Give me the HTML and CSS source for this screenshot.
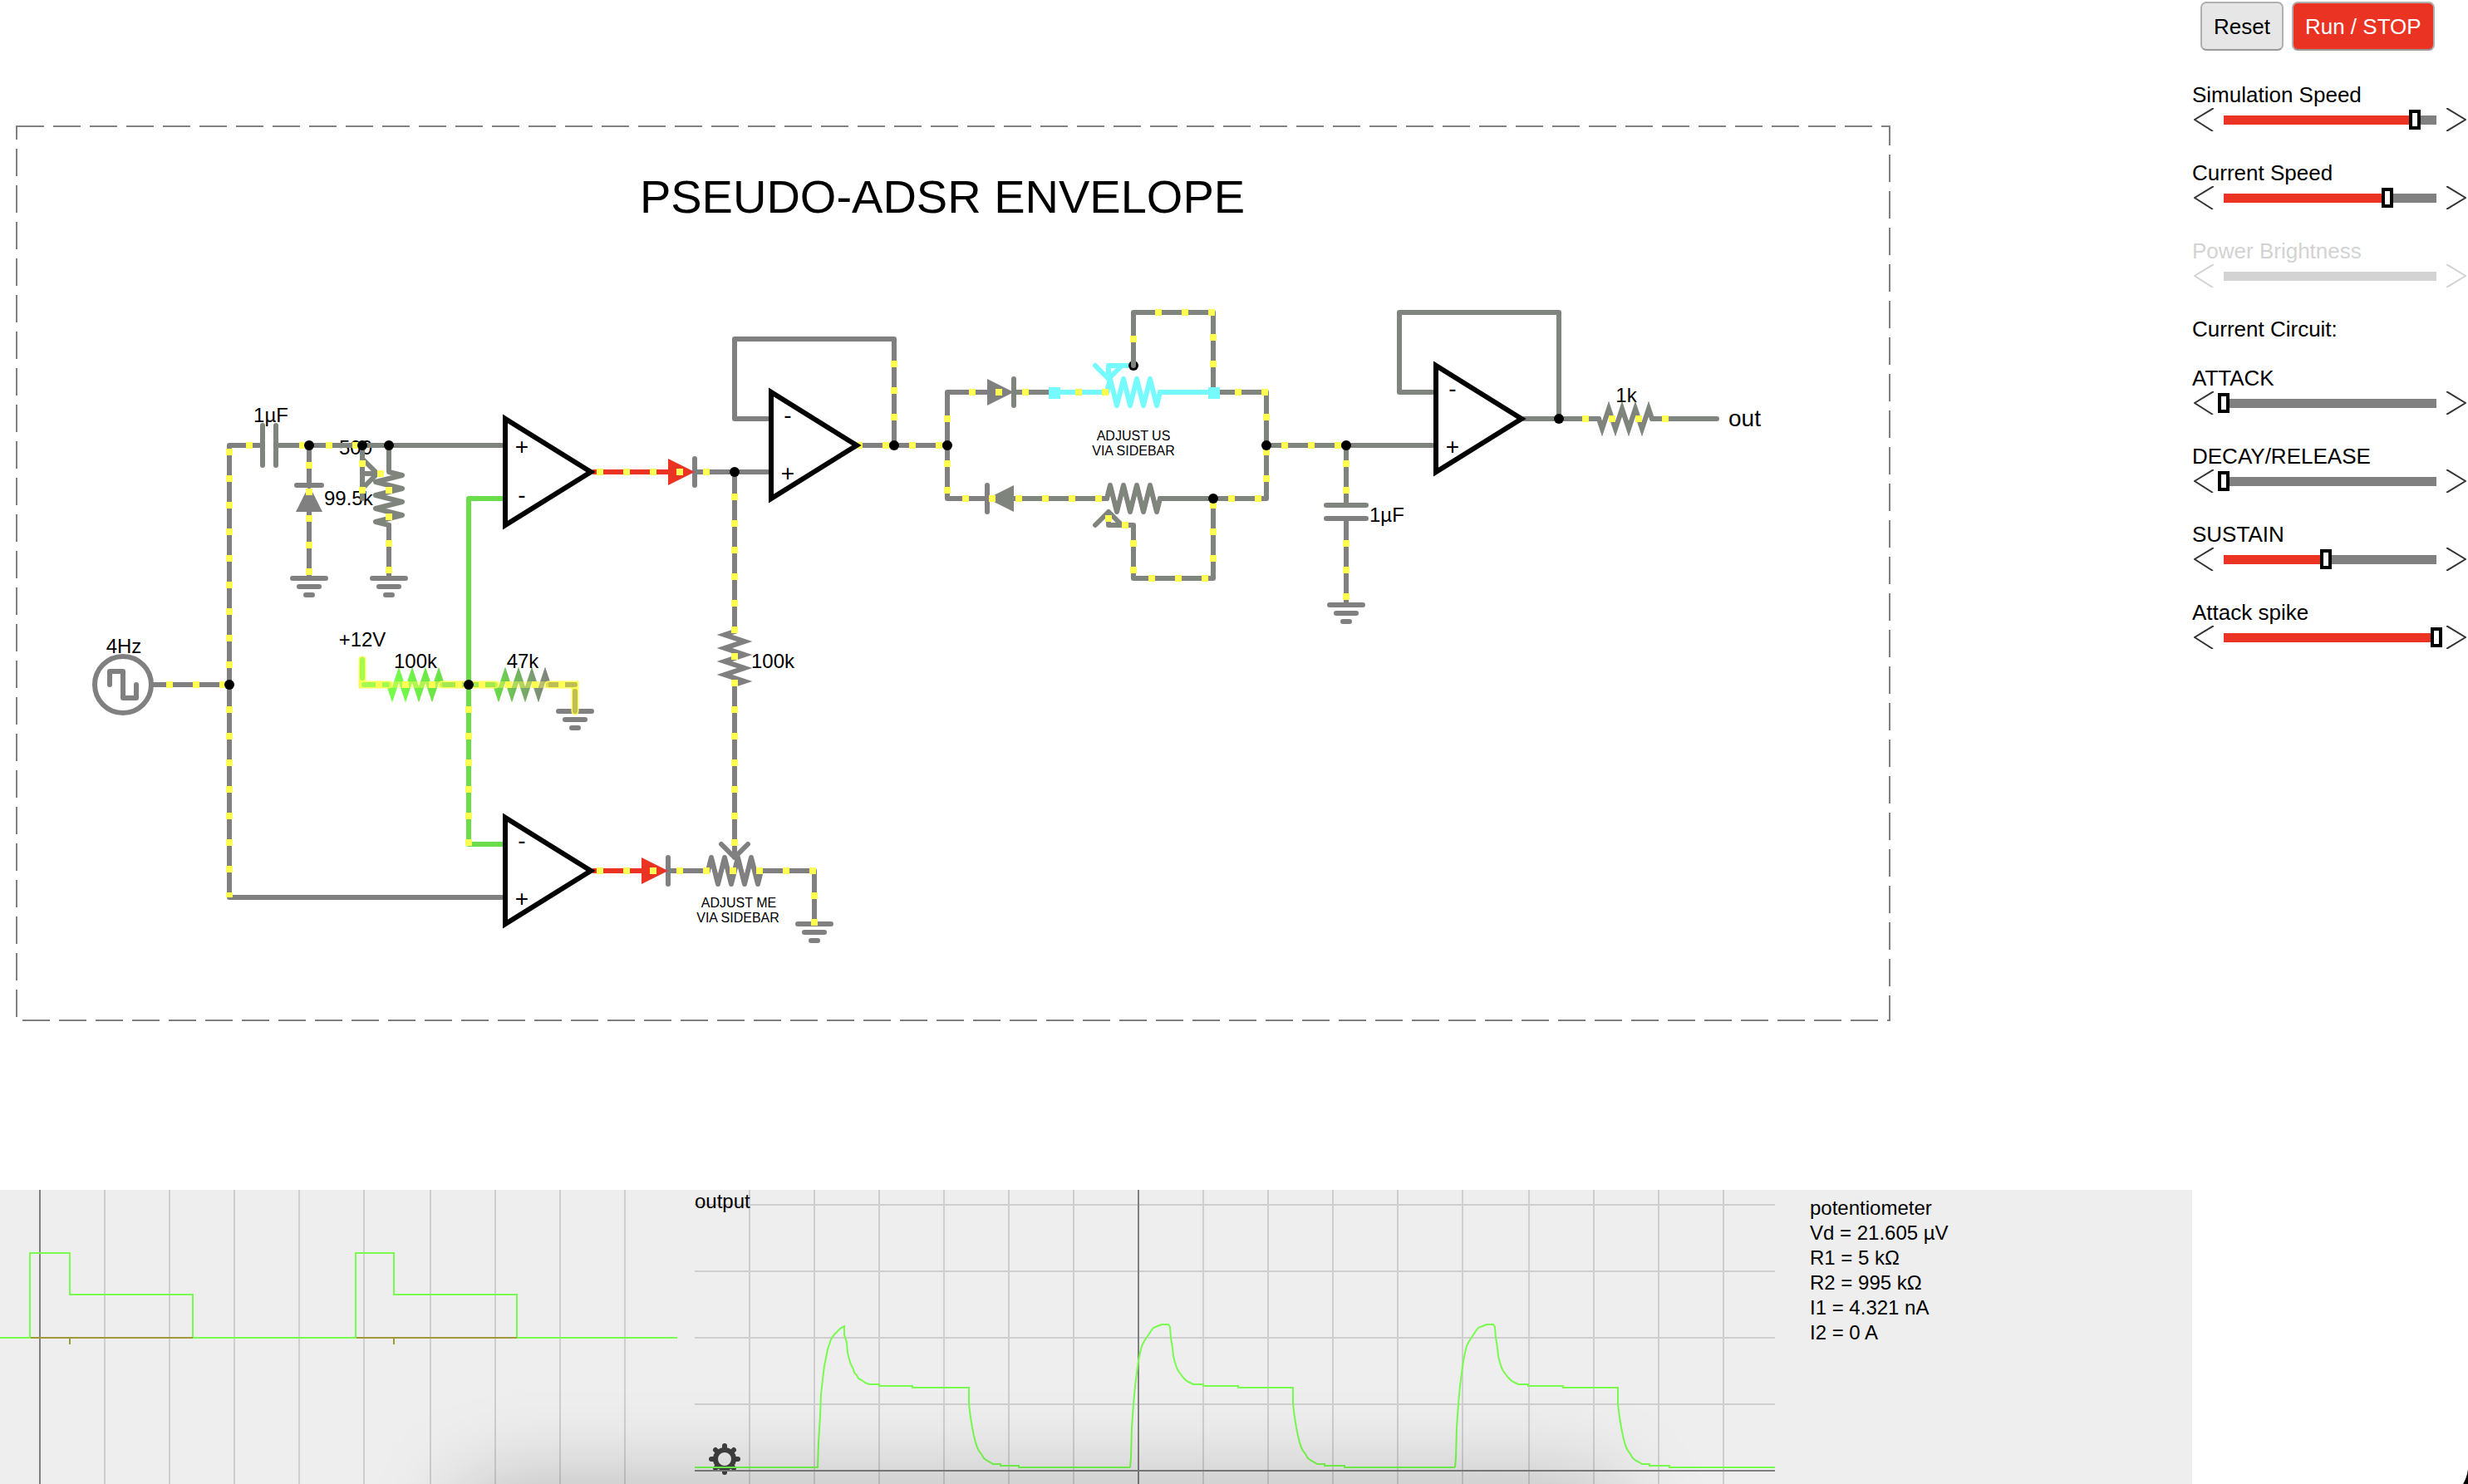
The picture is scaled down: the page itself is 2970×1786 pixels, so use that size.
FILE: index.html
```html
<!DOCTYPE html>
<html lang="en">
<head>
<meta charset="utf-8">
<title>Circuit Simulator</title>
<link rel="stylesheet" href="styles.css">
</head>
<body>
<div class="app">
  <main class="workspace">
    <svg class="circuit" viewBox="0 0 2638 1432" role="img" aria-label="Pseudo-ADSR envelope circuit">
      <defs>
        <linearGradient id="r100" gradientUnits="userSpaceOnUse" x1="0" y1="0" x2="64" y2="0">
          <stop offset="0" stop-color="#74ff4a"/><stop offset="1" stop-color="#6ae045"/>
        </linearGradient>
        <linearGradient id="r47" gradientUnits="userSpaceOnUse" x1="0" y1="0" x2="64" y2="0">
          <stop offset="0" stop-color="#68dc48"/><stop offset="1" stop-color="#808080"/>
        </linearGradient>
        <g id="ground"><path d="M-20 0H20M-12 10H12M-4 20H4"/></g>
        <path id="opamp" d="M0-64V64L103 0Z"/>
        <path id="pot" d="M0 0L4-16L12 16L20-16L28 16L36-16L44 16L52-16L60 16L64 0"/>
        <path id="resistor" d="M0 0L4 12L12-12L20 12L28-12L36 12L44-12L52 12L60-12L64 0"/>
        <path id="diode" d="M0-16V16L32 0Z"/>
      </defs>

      <rect class="frame" x="20" y="152" width="2254" height="1076"/>

      <g class="text">
        <text class="title" x="1134" y="256">PSEUDO-ADSR ENVELOPE</text>
        <text class="mid" x="326" y="508">1µF</text>
        <text class="mid" x="428" y="547">500</text>
        <text x="390" y="608">99.5k</text>
        <text class="mid" x="149" y="786">4Hz</text>
        <text class="mid" x="436" y="778">+12V</text>
        <text x="904" y="804">100k</text>
        <text x="1648" y="628">1µF</text>
        <text class="mid" x="1957" y="484">1k</text>
        <text class="big" x="2080" y="513">out</text>
        <text class="small" x="889" y="1092">ADJUST ME</text>
        <text class="small" x="888" y="1110">VIA SIDEBAR</text>
        <text class="small" x="1364" y="530">ADJUST US</text>
        <text class="small" x="1364" y="548">VIA SIDEBAR</text>
      </g>

      <g class="wire">
        <circle cx="148" cy="824" r="34"/>
        <path d="M132 824V808H148V840H164V824"/>
        <path d="M184 824H276M316 536H276V1080H608M884 504V408H1076V536M884 504H928"/>
        <path d="M372 536V584M357 584H387M372 616V696M468 632V696"/>
        <path d="M836 568H928M836 552V584M884 568V760M884 824V1032M868 1016L884 1032L900 1016"/>
        <path d="M804 1048H852M804 1032V1064M916 1048H980V1112M1034 536H1140M1188 472H1140V600H1188M1188 584V616"/>
        <use href="#pot" x="852" y="1048"/>
        <path class="sharp" d="M884 760L872 764L896 772L872 780L896 788L872 796L896 804L872 812L896 820L884 824"/>
        <use href="#ground" x="372" y="696"/><use href="#ground" x="468" y="696"/>
        <use href="#ground" x="692" y="856"/><use href="#ground" x="980" y="1112"/>
        <use href="#ground" x="1620" y="728"/>
        <path d="M1596 624H1644M1620 624V728"/>
      </g>
      <g class="wire charged">
        <path d="M316 512V560M332 512V560M332 536H608M436 536V600M438 554L454 570L438 586M436 570H454"/>
        <path d="M468 536V568L484 572L452 580L484 588L452 596L484 604L452 612L484 620L452 628L468 632"/>
        <path d="M1220 472H1268M1220 456V488M1460 472H1524V600M1220 600H1332M1396 600H1524M1460 600V696H1364V632H1334V616M1318 632L1334 616L1350 632"/>
        <path d="M1524 536H1728M1620 536V608M1596 608H1644M1728 472H1684V376H1876V504M1834 504H1924M1988 504H2066"/>
        <use href="#pot" x="1332" y="600"/>
        <use class="sharp" href="#resistor" x="1924" y="504"/>
      </g>
      <g class="wire green"><path d="M608 600H564V1016H608"/></g>
      <g class="wire red"><path d="M714 568H804M714 1048H772"/></g>
      <g class="wire cyan">
        <path d="M1268 472H1332M1396 472H1460M1364 440H1334V456M1318 440L1334 456L1350 440"/>
        <use href="#pot" x="1332" y="472"/>
      </g>

      <use class="fill-gray" href="#diode" transform="translate(372 616) rotate(-90)"/>
      <use class="fill-gray" href="#diode" x="1188" y="472"/>
      <use class="fill-charged" href="#diode" transform="translate(1220 600) rotate(180)"/>
      <use class="fill-red" href="#diode" x="804" y="568"/>
      <use class="fill-red" href="#diode" x="772" y="1048"/>

      <g class="wire sharp">
        <use href="#resistor" x="468" y="824" stroke="url(#r100)"/>
        <use href="#resistor" x="596" y="824" stroke="url(#r47)"/>
      </g>
      <g class="text">
        <text class="mid" x="500" y="804">100k</text>
        <text class="mid" x="629" y="804">47k</text>
      </g>
      <path class="hot" d="M436 794V824H468M532 824H596M660 824H692V856"/>
      <path class="hot-core lime" d="M436 794V816M438 824H468"/>
      <path class="hot-core leaf" d="M532 824H596"/>
      <path class="hot-core sand" d="M660 824H692M692 832V856"/>
      <path class="haze" d="M468 824H532M596 824H660"/>

      <path class="current" d="M296 536h8M360 536h72M276 540V804M276 850V1080M200 824h72M372 556V692M468 586V690M436 554V594M454 570h8M564 850V1018M884 594V1018M718 568H854M718 1048H982M980 1074V1114M1076 434V506M1030 536H1134M1140 500v8M1140 554V594M1166 472H1238M1294 472H1334M1486 472H1526M1524 498v8M1524 540V580M1158 600H1326M1478 600H1518M1460 604V676M1382 696H1454M1364 650V690M1334 620v8M1350 632h8M1542 536H1614M1620 554V594M1620 650V722M1904 504H2008M452 824H556M576 824H680"/>

      <g class="nodes">
        <circle cx="276" cy="824" r="6"/><circle cx="372" cy="536" r="6"/><circle cx="436" cy="536" r="6"/>
        <circle cx="468" cy="536" r="6"/><circle cx="564" cy="824" r="6"/><circle cx="884" cy="568" r="6"/>
        <circle cx="1076" cy="536" r="6"/><circle cx="1140" cy="536" r="6"/><circle cx="1364" cy="440" r="6"/>
        <circle cx="1460" cy="600" r="6"/><circle cx="1524" cy="536" r="6"/><circle cx="1620" cy="536" r="6"/>
        <circle cx="1876" cy="504" r="6"/>
      </g>
      <path class="wire charged" d="M1364 440V376H1460V472"/>
      <path class="current" d="M1364 404v8M1390 376H1462M1460 402V442"/>
      <path class="handle" d="M1262 466h14v14h-14zM1454 466h14v14h-14z"/>

      <g class="amp">
        <use href="#opamp" x="608" y="568"/><use href="#opamp" x="608" y="1048"/>
        <use href="#opamp" x="928" y="536"/><use href="#opamp" x="1728" y="504"/>
      </g>
      <g class="sign">
        <text x="628" y="547">+</text><text x="628" y="605">-</text>
        <text x="628" y="1021">-</text><text x="628" y="1091">+</text>
        <text x="948" y="509">-</text><text x="948" y="579">+</text>
        <text x="1748" y="477">-</text><text x="1748" y="547">+</text>
      </g>
    </svg>

    <section class="scopes" aria-label="Scopes">
      <svg class="plot" viewBox="0 0 836 354" aria-hidden="true">
        <path class="grid-line" d="M126 0V354M204 0V354M282 0V354M360 0V354M438 0V354M518 0V354M596 0V354M674 0V354M752 0V354"/>
        <path class="axis" d="M48 0V354"/>
        <path class="trace" d="M0 178H36V76H84V126H232V178H428V76H474V126H622V178H815"/>
        <path class="trace second" d="M37 178H232M84 178V186M429 178H622M474 178V186"/>
      </svg>
      <div class="output">
        <button class="gear" type="button" aria-label="Scope settings">
          <svg viewBox="-20 -20 40 40" aria-hidden="true">
            <path class="teeth" d="M0-16V16M-16 0H16M-11-11L11 11M11-11L-11 11"/>
            <circle class="rim" r="11"/>
          </svg>
        </button>
        <svg class="plot output-plot" viewBox="0 0 1300 354" aria-hidden="true">
          <defs>
            <path id="pulse" d="M524 334L525 322L526 286L528 258L530 236L532 220L534 206L536 196L538 188L541 182L545 176L549 170L552 166L557 164L562 162H570L572 165L573 178L575 190L576 200L578 208L580 214L582 218L585 222L588 226L592 230L596 232L600 234H612V236H654V238H720V258L722 274L724 286L726 296L728 304L730 310L732 314L735 318L738 323L742 326L746 328L749 330H758V332H782V334H915"/>
          </defs>
          <path class="grid-line" d="M66 0V354M144 0V354M222 0V354M300 0V354M378 0V354M456 0V354M612 0V354M690 0V354M768 0V354M846 0V354M924 0V354M1004 0V354M1082 0V354M1160 0V354M1238 0V354M0 18H1300M0 98H1300M0 178H1300M0 258H1300"/>
          <path class="axis" d="M534 0V354M0 338H1300"/>
          <path class="trace" d="M0 334H148L149 304L151 272L152 246L154 228L156 212L158 202L160 192L162 186L164 180L168 174L172 170L176 166L180 164V174L183 184L184 196L186 204L188 210L191 216L192 220L195 223L197 227L201 229L205 232L210 234H222V236H262V238H330V258L332 274L334 286L336 296L338 304L340 310L342 314L345 318L348 323L352 326L356 328L359 330H368V332H390V334H524"/>
          <use class="trace" href="#pulse"/>
          <use class="trace" href="#pulse" x="391"/>
          <text class="plot-label" x="0" y="22">output</text>
        </svg>
      </div>
      <div class="info">
        <p>potentiometer</p>
        <p>Vd = 21.605 µV</p>
        <p>R1 = 5 kΩ</p>
        <p>R2 = 995 kΩ</p>
        <p>I1 = 4.321 nA</p>
        <p>I2 = 0 A</p>
      </div>
      <div class="shade"></div>
    </section>
  </main>

  <aside class="sidebar">
    <div class="actions">
      <button class="btn" type="button">Reset</button>
      <button class="btn run" type="button">Run / STOP</button>
    </div>
    <div class="control">
      <label for="sim">Simulation Speed</label>
      <div class="slider">
        <button class="arrow" type="button" aria-label="Decrease simulation speed"><svg viewBox="0 0 24 28"><path d="M24 0L1 14L23 28"/></svg></button>
        <input id="sim" type="range" min="0" max="1000" value="898" style="--v:.898">
        <button class="arrow" type="button" aria-label="Increase simulation speed"><svg viewBox="0 0 24 28"><path d="M0 0L23 14L0 28"/></svg></button>
      </div>
    </div>
    <div class="control">
      <label for="cur">Current Speed</label>
      <div class="slider">
        <button class="arrow" type="button" aria-label="Decrease current speed"><svg viewBox="0 0 24 28"><path d="M24 0L1 14L23 28"/></svg></button>
        <input id="cur" type="range" min="0" max="1000" value="769" style="--v:.769">
        <button class="arrow" type="button" aria-label="Increase current speed"><svg viewBox="0 0 24 28"><path d="M0 0L23 14L0 28"/></svg></button>
      </div>
    </div>
    <div class="control off">
      <label for="pow">Power Brightness</label>
      <div class="slider">
        <button class="arrow" type="button" disabled aria-label="Decrease power brightness"><svg viewBox="0 0 24 28"><path d="M24 0L1 14L23 28"/></svg></button>
        <input id="pow" type="range" min="0" max="1000" value="500" disabled style="--v:0">
        <button class="arrow" type="button" disabled aria-label="Increase power brightness"><svg viewBox="0 0 24 28"><path d="M0 0L23 14L0 28"/></svg></button>
      </div>
    </div>
    <p class="heading">Current Circuit:</p>
    <div class="control">
      <label for="attack">ATTACK</label>
      <div class="slider">
        <button class="arrow" type="button" aria-label="Decrease attack"><svg viewBox="0 0 24 28"><path d="M24 0L1 14L23 28"/></svg></button>
        <input id="attack" type="range" min="0" max="1000" value="0" style="--v:0">
        <button class="arrow" type="button" aria-label="Increase attack"><svg viewBox="0 0 24 28"><path d="M0 0L23 14L0 28"/></svg></button>
      </div>
    </div>
    <div class="control">
      <label for="decay">DECAY/RELEASE</label>
      <div class="slider">
        <button class="arrow" type="button" aria-label="Decrease decay"><svg viewBox="0 0 24 28"><path d="M24 0L1 14L23 28"/></svg></button>
        <input id="decay" type="range" min="0" max="1000" value="0" style="--v:0">
        <button class="arrow" type="button" aria-label="Increase decay"><svg viewBox="0 0 24 28"><path d="M0 0L23 14L0 28"/></svg></button>
      </div>
    </div>
    <div class="control">
      <label for="sustain">SUSTAIN</label>
      <div class="slider">
        <button class="arrow" type="button" aria-label="Decrease sustain"><svg viewBox="0 0 24 28"><path d="M24 0L1 14L23 28"/></svg></button>
        <input id="sustain" type="range" min="0" max="1000" value="482" style="--v:.482">
        <button class="arrow" type="button" aria-label="Increase sustain"><svg viewBox="0 0 24 28"><path d="M0 0L23 14L0 28"/></svg></button>
      </div>
    </div>
    <div class="control">
      <label for="spike">Attack spike</label>
      <div class="slider">
        <button class="arrow" type="button" aria-label="Decrease attack spike"><svg viewBox="0 0 24 28"><path d="M24 0L1 14L23 28"/></svg></button>
        <input id="spike" type="range" min="0" max="1000" value="1000" style="--v:1">
        <button class="arrow" type="button" aria-label="Increase attack spike"><svg viewBox="0 0 24 28"><path d="M0 0L23 14L0 28"/></svg></button>
      </div>
    </div>
    <svg class="corner" viewBox="0 0 6 18" aria-hidden="true"><path d="M6 0V18H0Q5 10 6 0Z"/></svg>
  </aside>
</div>
</body>
</html>
```
FILE: styles.css
```css
* { box-sizing: border-box; }
body {
  margin: 0;
  background: #fff;
  color: #000;
  font-family: "Liberation Sans", Arial, Helvetica, sans-serif;
}
p { margin: 0; }

.app {
  display: grid;
  grid-template-columns: minmax(0, 1fr) 332px;
  min-height: 100vh;
}
.workspace { display: flex; flex-direction: column; min-width: 0; }
.circuit { display: block; width: 100%; height: auto; }

/* Schematic */
.frame { fill: none; stroke: #808080; stroke-width: 2; stroke-dasharray: 33 11; }
.text { font-size: 24px; }
.text .mid, .text .title, .text .small { text-anchor: middle; }
.text .title { font-size: 56px; }
.text .big { font-size: 28px; }
.text .small { font-size: 16px; }
.wire { fill: none; stroke: #808080; stroke-width: 6; stroke-linecap: round; stroke-linejoin: round; }
.charged { stroke: #7f847c; }
.green { stroke: #6bdc4a; }
.red { stroke: #ea3323; }
.cyan { stroke: #75fbfd; }
.sharp { stroke-linejoin: miter; stroke-miterlimit: 10; }
.fill-gray { fill: #808080; }
.fill-charged { fill: #7f847c; }
.fill-red { fill: #ea3323; }
.hot { fill: none; stroke: #ffff54; stroke-width: 9; stroke-linecap: round; }
.hot-core { fill: none; stroke-width: 6; stroke-linecap: round; }
.lime { stroke: #a2fc4d; }
.leaf { stroke: #a5ea4d; }
.sand { stroke: #bfbe54; }
.haze { fill: none; stroke: #ffff54; stroke-width: 8; opacity: .45; }
.current { fill: none; stroke: #ffff54; stroke-width: 8; stroke-dasharray: 8 24; }
.handle { fill: #75fbfd; }
.amp { fill: none; stroke: #000; stroke-width: 6; stroke-miterlimit: 10; }
.sign { font-size: 28px; text-anchor: middle; }

/* Scopes */
.scopes {
  position: relative;
  display: grid;
  grid-template-columns: minmax(0, 836fr) minmax(0, 1300fr) minmax(0, 502fr);
  flex: 1;
  overflow: hidden;
  background: #eee;
}
.plot { display: block; width: 100%; }
.output { position: relative; }
.output-plot { position: relative; pointer-events: none; }
.info { padding: 7px 0 0 42px; font-size: 24px; line-height: 30px; white-space: nowrap; }
.grid-line { fill: none; stroke: #cecece; stroke-width: 2; }
.axis { fill: none; stroke: #808080; stroke-width: 2; }
.trace { fill: none; stroke: #78fb4e; stroke-width: 2; }
.second { stroke: #a0993a; }
.plot-label { font-size: 24px; }
.gear {
  position: absolute;
  left: 16px;
  top: 304px;
  width: 40px;
  height: 40px;
  padding: 0;
  border: 0;
  background: none;
}
.gear svg { display: block; }
.teeth { fill: none; stroke: #404040; stroke-width: 6; stroke-linecap: round; }
.rim { fill: #eee; stroke: #404040; stroke-width: 6; }
.shade {
  position: absolute;
  top: 100%;
  left: 21%;
  right: 26%;
  height: 200px;
  border-radius: 40px;
  box-shadow: 0 4px 110px rgba(0, 0, 0, .25);
  pointer-events: none;
}

/* Sidebar */
.sidebar { position: relative; padding-top: 2px; font-size: 26px; line-height: 31px; }
.actions { display: flex; gap: 10px; margin: 0 0 38px 10px; }
.btn {
  height: 59px;
  padding: 2px 14px 0;
  border: 2px solid #b0b0b0;
  border-bottom-color: #999;
  border-radius: 7px;
  background: #e6e6e6;
  color: #000;
  font: inherit;
}
.run { background: #ea3323; color: #fff; }
.control { margin-bottom: 35px; }
.control label { display: block; }
.heading { margin: 0 0 28px; }
.slider { display: flex; gap: 5px; height: 28px; padding: 0 2px; }
.arrow { flex: none; width: 24px; padding: 0; border: 0; background: none; }
.arrow svg { display: block; width: 24px; height: 28px; }
.arrow path { fill: none; stroke: #333; stroke-width: 2; }
input[type="range"] {
  appearance: none;
  flex: 1;
  min-width: 0;
  height: 28px;
  margin: 0;
  background:
    linear-gradient(#ea3323, #ea3323) 7px center / calc((100% - 14px) * var(--v)) 11px no-repeat,
    linear-gradient(#808080, #808080) center / calc(100% - 14px) 11px no-repeat;
}
input[type="range"]::-webkit-slider-thumb {
  appearance: none;
  width: 14px;
  height: 24px;
  border: 4px solid #000;
  background: #fff;
}
.off { color: #d3d3d3; }
.off .arrow path { stroke: #d3d3d3; }
.off input[type="range"] { background: linear-gradient(#d3d3d3, #d3d3d3) center / calc(100% - 14px) 11px no-repeat; }
.off input[type="range"]::-webkit-slider-thumb { visibility: hidden; }
.corner { position: absolute; right: 0; bottom: 0; width: 6px; height: 18px; }
```
